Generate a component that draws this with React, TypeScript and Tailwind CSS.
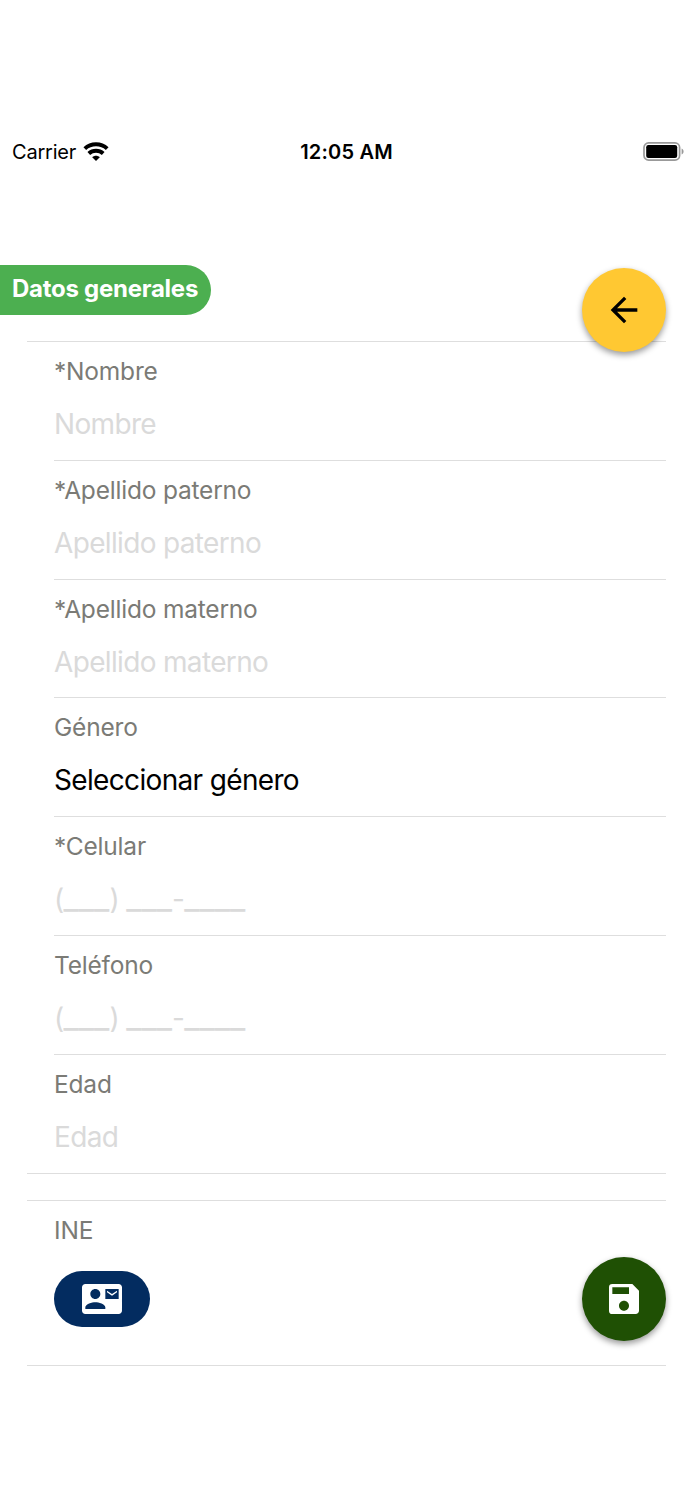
import { MdArrowBack, MdContactMail, MdSave } from "react-icons/md";

type Field = {
    label: string;
    placeholder?: string;
    value?: string;
};

const fields: Field[] = [
    { label: "*Nombre", placeholder: "Nombre" },
    { label: "*Apellido paterno", placeholder: "Apellido paterno" },
    { label: "*Apellido materno", placeholder: "Apellido materno" },
    { label: "Género", value: "Seleccionar género" },
    { label: "*Celular" },
    { label: "Teléfono" },
    { label: "Edad", placeholder: "Edad" },
];

function WifiIcon() {
    return (
        <svg className="w-[26px] h-[19px]" viewBox="0 0 26 19" fill="none" stroke="black" strokeWidth="4">
            <path d="M1.8 6.6C8 0.9 18 0.9 24.2 6.6" />
            <path d="M5.8 11.5C9.9 7.8 16.1 7.8 20.2 11.5" />
            <path d="M13 19L9.2 15.2C11.3 13.2 14.7 13.2 16.8 15.2Z" fill="black" stroke="none" />
        </svg>
    );
}

function BatteryIcon() {
    return (
        <svg className="w-[41px] h-[19px]" viewBox="0 0 41 19">
            <rect x="1" y="0.9" width="35.6" height="17.2" rx="4.6" fill="none" stroke="#999" strokeWidth="1.7" />
            <rect x="3.2" y="3" width="31" height="13" rx="2.2" fill="black" />
            <path d="M38.6 6.5C41.2 7.3 41.2 11.7 38.6 12.5Z" fill="#999" />
        </svg>
    );
}

function StatusBar() {
    return (
        <div className="grid grid-cols-3 items-center h-6 pl-3 pr-[9px] text-xl leading-6 text-black">
            <div className="flex items-center gap-[7px]">
                <span className="pt-0.5 tracking-[-0.2px]">Carrier</span>
                <WifiIcon />
            </div>
            <span className="pt-0.5 pr-[3px] text-center font-semibold tracking-[0.2px] whitespace-nowrap">12:05 AM</span>
            <div className="flex justify-end">
                <BatteryIcon />
            </div>
        </div>
    );
}

function Blank({ children }: { children: string }) {
    return <span className="text-[33.5px] leading-none tracking-normal">{children}</span>;
}

function PhoneMask() {
    return (
        <>
            (<Blank>___</Blank>) <Blank>___</Blank>-<Blank>____</Blank>
        </>
    );
}

export default function App() {
    return (
        <div className="relative w-[693px] h-[1500px] bg-white overflow-hidden pt-[138px] font-[Inter,sans-serif]">
            <StatusBar />
            <h1 className="mt-[103px] w-[211px] h-[50px] pl-3 rounded-r-full bg-[#4caf50] text-white text-2xl leading-[47px] font-bold tracking-[-0.26px] whitespace-nowrap">
                Datos generales
            </h1>

            <form className="mt-[26px] mx-[27px] h-[833px] border-y border-[#dedede] pl-[27px]">
                {fields.map((field, i) => (
                    <div
                        key={field.label}
                        className={`h-[118.8px] pt-[11px] border-[#dedede] ${i < fields.length - 1 ? "border-b" : ""}`}
                    >
                        <div className="text-[24.5px] leading-9 tracking-[-0.2px] text-[#7b7b76]">{field.label}</div>
                        <div
                            className={`mt-[17px] h-9 text-[28px] leading-9 tracking-[-0.66px] ${field.value ? "text-black" : "text-[#dadada]"}`}
                        >
                            {field.value ?? field.placeholder ?? <PhoneMask />}
                        </div>
                    </div>
                ))}
            </form>

            <section className="mt-[26px] mx-[27px] h-[166px] border-y border-[#dedede] pl-[27px] pt-[11px]">
                <div className="text-[24.5px] leading-9 tracking-[-0.2px] text-[#7b7b76]">INE</div>
                <button className="mt-[23px] flex items-center justify-center w-[96px] h-14 rounded-full bg-[#032c60] text-white">
                    <MdContactMail className="size-[40px]" />
                </button>
            </section>

            <button className="absolute left-[582px] top-[268px] flex items-center justify-center size-[84px] rounded-full bg-[#ffc832] text-black shadow-[0_3px_6px_rgba(0,0,0,0.4)]">
                <MdArrowBack className="size-[40px]" />
            </button>
            <button className="absolute left-[582px] top-[1257px] flex items-center justify-center size-[84px] rounded-full bg-[#1f5004] text-white shadow-[0_3px_6px_rgba(0,0,0,0.4)]">
                <MdSave className="size-[40px]" />
            </button>
        </div>
    );
}
